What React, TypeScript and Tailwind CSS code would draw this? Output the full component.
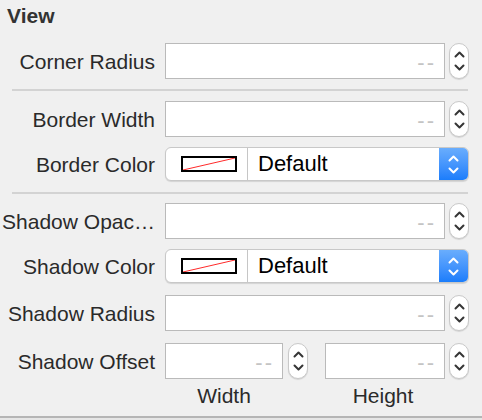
import React from "react";

const FONT = { fontFamily: '"Liberation Sans", Arial, Helvetica, sans-serif' };

function Chevron({ dir, color }: { dir: "up" | "down"; color: string }) {
  return (
    <svg width="11" height="7" viewBox="0 0 11 7" className="block">
      <path
        d={dir === "up" ? "M1.5 5.5 L5.5 1.5 L9.5 5.5" : "M1.5 1.5 L5.5 5.5 L9.5 1.5"}
        stroke={color}
        strokeWidth="2"
        fill="none"
        strokeLinecap="round"
        strokeLinejoin="round"
      />
    </svg>
  );
}

function Stepper() {
  return (
    <div className="w-[20px] h-[36px] shrink-0 rounded-full bg-white border border-[#c9c9c9] shadow-[0_1px_1px_rgba(0,0,0,0.12)] flex flex-col items-center justify-center gap-[6px]">
      <Chevron dir="up" color="#353535" />
      <Chevron dir="down" color="#353535" />
    </div>
  );
}

function Field({ width }: { width: string }) {
  return (
    <div
      className={`${width} h-[36px] shrink-0 bg-white border border-[#bababa] flex items-center justify-end pr-[8px]`}
    >
      <span className="text-[22px] leading-none text-[#c4c4c4] tracking-[2px] pt-[4px]">--</span>
    </div>
  );
}

function Label({ children }: { children: React.ReactNode }) {
  return (
    <div className="w-[165px] shrink-0 pr-[10px] text-right text-[21px] leading-none text-[#2a2a2a] whitespace-nowrap">
      {children}
    </div>
  );
}

function NumberRow({ label }: { label: string }) {
  return (
    <div className="flex items-center h-[36px]">
      <Label>{label}</Label>
      <Field width="w-[280px]" />
      <div className="ml-[4px]">
        <Stepper />
      </div>
    </div>
  );
}

function Swatch() {
  return (
    <div className="w-[56px] h-[16px] border-2 border-black bg-white">
      <svg width="52" height="12" viewBox="0 0 52 12" className="block">
        <line x1="0" y1="12" x2="52" y2="0" stroke="#ff2a2a" strokeWidth="1" />
      </svg>
    </div>
  );
}

function ColorRow({ label }: { label: string }) {
  return (
    <div className="flex items-start h-[36px]">
      <div className="h-[34px] flex items-center">
        <Label>{label}</Label>
      </div>
      <div className="w-[304px] h-[34px] flex rounded-[6px] border border-[#c8c8c8] bg-white shadow-[0_1px_1px_rgba(0,0,0,0.12)] overflow-hidden">
        <div className="w-[82px] shrink-0 flex items-center pl-[15px] border-r border-[#c6c6c6]">
          <Swatch />
        </div>
        <div className="flex-1 flex items-center pl-[10px] text-[22px] leading-none text-black">Default</div>
        <div className="w-[29px] shrink-0 bg-gradient-to-b from-[#69adfd] to-[#1a7dfb] flex flex-col items-center justify-center gap-[5px]">
          <Chevron dir="up" color="#ffffff" />
          <Chevron dir="down" color="#ffffff" />
        </div>
      </div>
    </div>
  );
}

function Separator({ top, bottom }: { top: string; bottom: string }) {
  return (
    <div className={`${top} ${bottom} ml-[12px] w-[456px] h-[2px] bg-[#d3d3d3]`} />
  );
}

export default function App() {
  return (
    <div className="w-[482px] h-[420px] bg-[#f0f0f0] flex flex-col" style={FONT}>
      <div className="h-[43px] pl-[7px] pt-[5px]">
        <span className="text-[21px] font-bold leading-none text-[#333333]">View</span>
      </div>
      <NumberRow label="Corner Radius" />
      <Separator top="mt-[10px]" bottom="mb-[10px]" />
      <NumberRow label="Border Width" />
      <div className="mt-[10px]">
        <ColorRow label="Border Color" />
      </div>
      <Separator top="mt-[9px]" bottom="mb-[9px]" />
      <NumberRow label="Shadow Opac…" />
      <div className="mt-[10px]">
        <ColorRow label="Shadow Color" />
      </div>
      <div className="mt-[10px]">
        <NumberRow label="Shadow Radius" />
      </div>
      <div className="mt-[12px] flex items-center h-[36px]">
        <Label>Shadow Offset</Label>
        <Field width="w-[118px]" />
        <div className="ml-[5px]">
          <Stepper />
        </div>
        <div className="ml-[17px]">
          <Field width="w-[120px]" />
        </div>
        <div className="ml-[4px]">
          <Stepper />
        </div>
      </div>
      <div className="flex mt-[6px]">
        <div className="w-[165px] shrink-0" />
        <div className="w-[118px] text-center text-[21px] leading-none text-[#2a2a2a]">Width</div>
        <div className="w-[42px] shrink-0" />
        <div className="w-[116px] text-center text-[21px] leading-none text-[#2a2a2a]">Height</div>
      </div>
      <div className="flex-1" />
      <div className="h-[2px] bg-[#b5b5b5]" />
      <div className="h-[2px] bg-[#e6e6e6]" />
    </div>
  );
}
